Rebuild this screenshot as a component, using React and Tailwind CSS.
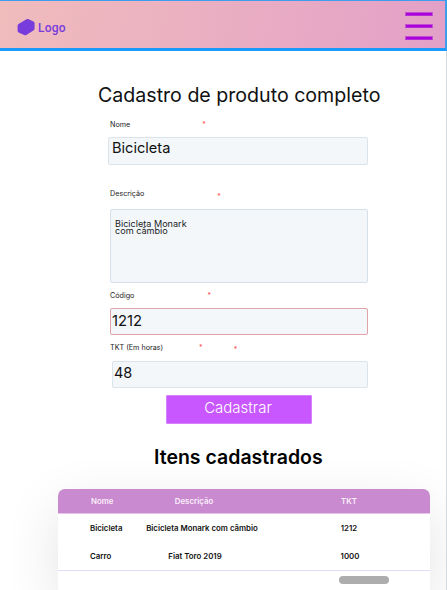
import React from "react";

function Label({ children, className = "", stars = null }) {
  return (
    <div className={`flex h-3 items-center whitespace-nowrap text-[7.2px] leading-3 text-[#222] ${className}`}>
      {children}
      {stars}
    </div>
  );
}

function Star({ className }) {
  return <span className={`h-3 text-[7px] leading-3 text-[#ff4d4f] ${className}`}>*</span>;
}

function Bar() {
  return <span className="h-1 border border-x-[#c45bd0] border-t-[#c04fd2] border-b-[#b52bd6] bg-[#a900dc]" />;
}

function Header() {
  return (
    <header className="flex h-[51px] items-start justify-between border-t border-r-2 border-b-3 border-t-[#3e9dee] border-r-[#3e9dee] border-b-[#1a9bfc] bg-linear-[100deg] from-[#f0bcbc] to-[#e3a0c8] pr-3 pl-[17px]">
      <div className="mt-[17px] flex items-center">
        <svg width="18" height="18" viewBox="0 0 18 18" fill="#783cdc">
          <path d="M9.500 1.300q1.200-.6 2.200 0l4.800 2.300q1.100.6 1.100 1.600v5.400q0 1-.9 1.700l-7.300 4.600q-1.200.6-2.300.1l-5-2.300Q.6 14 .6 13V7.600q0-1 .9-1.600z" />
        </svg>
        <span className="mt-[2px] ml-[3px] font-['Roboto',sans-serif] text-[12px] leading-4 font-medium tracking-[0.2px] text-[#783cdc]">Logo</span>
      </div>
      <button aria-label="Menu" className="mt-[11px] flex w-7 flex-col gap-2">
        <Bar />
        <Bar />
        <Bar />
      </button>
    </header>
  );
}

function ProductForm() {
  return (
    <form className="flex flex-col pt-6">
      <h1 className="ml-[98px] h-10 text-[19.6px] leading-10 whitespace-nowrap">Cadastro de produto completo</h1>
      <Label className="mt-1 ml-[110px]" stars={<Star className="ml-[72px]" />}>Nome</Label>
      <div className="mt-[6px] ml-[108px] h-7 w-[260px] rounded-xs border border-[#dbe4ea] bg-[#f3f7fa] pl-[3px] text-[14.6px] leading-[20px]">Bicicleta</div>
      <Label className="mt-[23px] ml-[110px]" stars={<Star className="mt-[5px] ml-[73px]" />}>Descrição</Label>
      <div className="mt-[9px] ml-[110px] h-[74px] w-[258px] rounded-xs border border-[#d6e0ea] bg-[#f3f7fa] pt-[10px] pl-1 text-[9.1px] leading-[7.4px] text-[#222]">
        Bicicleta Monark
        <br />
        com câmbio
      </div>
      <Label className="mt-[7px] ml-[110px]" stars={<Star className="ml-[73px]" />}>Código</Label>
      <div className="mt-[6px] ml-[110px] h-[27px] w-[258px] rounded-xs border border-[#dfa3a8] bg-[#f3f7fa] pl-px text-[14.8px] leading-[24px]">1212</div>
      <Label
        className="mt-[7px] ml-[110px]"
        stars={
          <>
            <Star className="ml-[36px]" />
            <Star className="mt-[3px] ml-[31px]" />
          </>
        }
      >
        TKT (Em horas)
      </Label>
      <div className="mt-[7px] ml-[112px] h-[27px] w-[256px] rounded-xs border border-[#dbe4ea] bg-[#f3f7fa] pl-px text-[14.5px] leading-[22px]">48</div>
      <button type="button" className="mt-[7px] ml-[166px] h-[29px] w-[146px] rounded-[1px] border border-[#d681ff] bg-[#c957ff] pr-[2px] pb-[5px] text-[15px] leading-[21px] font-light text-white">Cadastrar</button>
    </form>
  );
}

function ItemsTable() {
  return (
    <section className="mt-[65px] ml-[58px] h-[101px] w-[372px] rounded-t-[7px] bg-white text-[7.850px] font-semibold whitespace-nowrap shadow-[0_18px_56px_rgba(0,0,0,0.11)]">
      <div className="flex h-[25px] items-center rounded-t-[7px] border-b border-[#e4c5e7] bg-[#c98acf] pt-px text-[#fbeefb]">
        <span className="w-[84px] pl-[33px]">Nome</span>
        <span className="w-[104px] text-center">Descrição</span>
        <span className="ml-[61px] w-[84px] text-center">TKT</span>
      </div>
      <div className="flex h-[29px] items-center">
        <span className="w-[84px] pl-8">Bicicleta</span>
        <span className="w-[120px] text-center">Bicicleta Monark com câmbio</span>
        <span className="ml-[45px] w-[84px] text-center">1212</span>
      </div>
      <div className="flex h-7 items-center border-b border-[#dedcf8]">
        <span className="w-[84px] pl-8">Carro</span>
        <span className="w-[106px] text-center">Fiat Toro 2019</span>
        <span className="ml-[60px] w-[84px] text-center">1000</span>
      </div>
      <div className="mt-[5px] ml-[281px] h-2 w-[50px] rounded-full bg-[#adadad]" />
    </section>
  );
}

export default function App() {
  return (
    <div className="h-[590px] w-[447px] overflow-hidden bg-white font-['Inter',sans-serif] text-[#111]">
      <Header />
      <main className="h-[539px] overflow-hidden border-r border-[#d2dade]">
        <ProductForm />
        <h2 className="-mb-[49px] ml-[154px] pt-[17px] text-[19.5px] leading-8 font-semibold whitespace-nowrap text-black">Itens cadastrados</h2>
        <ItemsTable />
      </main>
    </div>
  );
}
